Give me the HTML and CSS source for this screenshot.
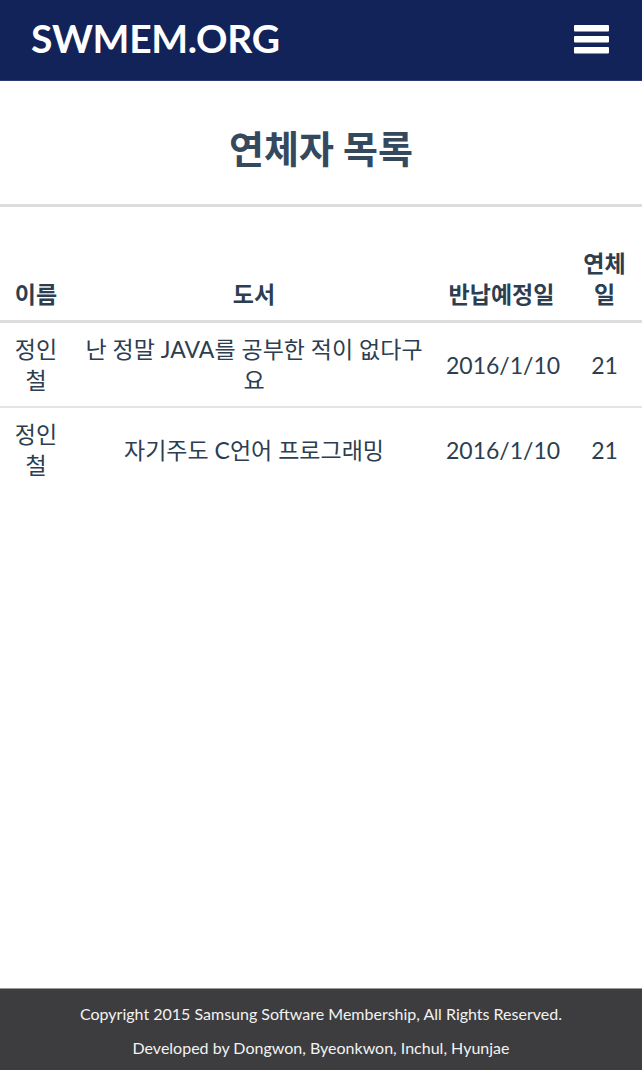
FILE: index.html
```html
<!DOCTYPE html>
<html lang="ko">
<head>
<meta charset="utf-8">
<title>SWMEM.ORG - 연체자 목록</title>
<link rel="stylesheet" href="styles.css">
</head>
<body>
<div class="page">
  <nav class="navbar">
    <a class="brand" href="#">SWMEM.ORG</a>
    <button class="toggle" aria-label="menu">
      <svg width="35" height="29" viewBox="0 0 35 29"><rect x="0" y="0" width="35" height="6.5" rx="1" fill="#fff"/><rect x="0" y="11" width="35" height="6.5" rx="1" fill="#fff"/><rect x="0" y="22" width="35" height="6.5" rx="1" fill="#fff"/></svg>
    </button>
  </nav>
  <main class="main">
    <header class="title-box">
      <h1 class="title">연체자 목록</h1>
    </header>
    <table class="list">
      <colgroup>
        <col class="c-name">
        <col class="c-book">
        <col class="c-date">
        <col class="c-days">
      </colgroup>
      <thead>
        <tr><th>이름</th><th>도서</th><th>반납예정일</th><th>연체일</th></tr>
      </thead>
      <tbody>
        <tr><td>정인철</td><td>난 정말 JAVA를 공부한 적이 없다구요</td><td>2016/1/10</td><td>21</td></tr>
        <tr><td>정인철</td><td>자기주도 C언어 프로그래밍</td><td>2016/1/10</td><td>21</td></tr>
      </tbody>
    </table>
  </main>
  <footer class="footer">
    <p>Copyright 2015 Samsung Software Membership, All Rights Reserved.</p>
    <p>Developed by Dongwon, Byeonkwon, Inchul, Hyunjae</p>
  </footer>
</div>
</body>
</html>
```

FILE: styles.css
```css
* { box-sizing: border-box; }
html, body { margin: 0; padding: 0; }
body {
  font-family: Lato, "Noto Sans CJK KR", sans-serif;
  color: #2c3e50;
  background: #fff;
}
.page {
  min-height: 100vh;
  display: flex;
  flex-direction: column;
}
.navbar {
  height: 81px;
  background: #12235a;
  border-bottom: 1px solid #2a3a6c;
  display: flex;
  align-items: center;
  justify-content: space-between;
  padding: 0 32px 0 31px;
}
.brand {
  color: #fff;
  text-decoration: none;
  font-weight: 700;
  font-size: 39px;
  letter-spacing: -0.3px;
  line-height: 1;
  margin-top: -3px;
}
.toggle {
  background: none;
  border: 0;
  padding: 0;
  margin-right: 1px;
  margin-top: -2px;
  display: flex;
}
.main { flex: 1; }
.title-box {
  border-bottom: 3px solid #dddddd;
  height: 126px;
  display: flex;
  align-items: center;
  justify-content: center;
  padding-top: 12px;
}
.title {
  margin: 0;
  font-size: 38px;
  font-weight: 700;
  color: #34495e;
  line-height: 1.2;
}
.list {
  width: 100%;
  margin-top: 31px;
  border-collapse: collapse;
  table-layout: fixed;
  font-size: 23px;
  line-height: 31px;
}
.c-name { width: 72px; }
.c-book { width: 364px; }
.c-date { width: 131px; }
.c-days { width: 75px; }
.list th, .list td {
  padding: 10px 10px;
  text-align: center;
  vertical-align: middle;
}
.list td { padding: 11px 10px 10px; }
.list th {
  font-weight: 700;
  vertical-align: bottom;
  border-bottom: 3px solid #dddddd;
}
.list td { border-bottom: 2px solid #e4e4e4; }
.list tbody tr:last-child td { border-bottom: 0; }
.footer {
  background: #3d3d3f;
  border-top: 1px solid #9a9a9a;
  color: #f2f2f2;
  text-align: center;
  font-size: 16px;
  padding: 13px 0 10px;
}
.footer p {
  margin: 0 0 10px;
  line-height: 24px;
}
.footer p:last-child { margin-bottom: 0; }
```
